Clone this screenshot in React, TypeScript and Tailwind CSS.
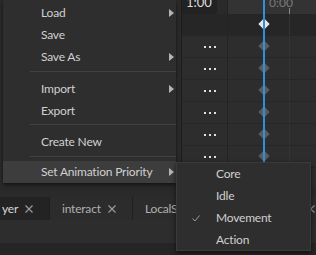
import React from 'react';

const font = { fontFamily: 'Lato, "Noto Sans", sans-serif' };

function Arrow() {
  return (
    <svg width="5" height="8" viewBox="0 0 5 8" className="absolute right-[2px] top-[7px]">
      <path d="M0 0 L5 4 L0 8 Z" fill="#b5b5b5" />
    </svg>
  );
}

function Item({ label, arrow, active }: { label: string; arrow?: boolean; active?: boolean }) {
  return (
    <div className={`relative h-[22px] flex items-center pl-[38px] text-[12px] tracking-[-0.2px] text-[#d0d0d0] ${active ? 'bg-[#3d3d3d]' : ''}`}>
      {label}
      {arrow && <Arrow />}
    </div>
  );
}

function Sep({ h, pt }: { h: string; pt: string }) {
  return (
    <div className={`${h} ${pt}`}>
      <div className="ml-[27px] h-px bg-[#414141]" />
    </div>
  );
}

function Dots() {
  return (
    <div className="flex gap-[3px]">
      <span className="w-[2px] h-[2px] bg-[#e0e0e0]" />
      <span className="w-[2px] h-[2px] bg-[#e0e0e0]" />
      <span className="w-[2px] h-[2px] bg-[#e0e0e0]" />
    </div>
  );
}

function Row({ first }: { first?: boolean }) {
  return (
    <div className={`h-[22px] flex border-b border-[#272727] ${first ? 'bg-[#262626]' : 'bg-[#2d2d2d]'}`}>
      <div className="w-[46px] flex items-center justify-end pr-[11px] border-r border-[#232323]">
        {!first && <Dots />}
      </div>
      <div className="flex-1 relative">
        <div className="absolute left-[61px] top-0 bottom-0 w-px bg-[#343434]" />
        <div
          className={`absolute left-[32px] top-[6px] w-[8px] h-[8px] rotate-45 ${first ? 'bg-[#e6e6e6]' : 'bg-[#5c5c5c]'}`}
        />
      </div>
    </div>
  );
}

function Tab({ label, w, active, pl }: { label: string; w: string; active?: boolean; pl: string }) {
  return (
    <div className={`${w} ${pl} h-full flex items-center gap-[7px] border-r border-[#1f1f1f] text-[12px] tracking-[-0.2px] ${active ? 'bg-[#232323] text-[#d8d8d8]' : 'bg-[#2c2c2c] text-[#b0b0b0]'}`}>
      <span>{label}</span>
      <svg width="8" height="8" viewBox="0 0 8 8">
        <path d="M0.5 0.5 L7.5 7.5 M7.5 0.5 L0.5 7.5" stroke="#9a9a9a" strokeWidth="1.2" />
      </svg>
    </div>
  );
}

export default function App() {
  return (
    <div className="w-[316px] h-[255px] relative overflow-hidden bg-[#2a2a2a] flex flex-col" style={font}>
      <div className="h-[186px] flex">
        <div className="w-[182px] bg-[#2b2b2b] border-r border-[#1d1d1d]" />
        <div className="flex-1 flex flex-col relative bg-[#2d2d2d]">
          <div className="h-[14px] flex bg-[#2a2a2a]">
            <div className="w-[35px] bg-[#222222] rounded-br-[3px] overflow-hidden text-[13px] leading-[13px] text-[#dcdcdc] pl-[4px]">
              <div className="-mt-[4px]">1:00</div>
            </div>
            <div className="w-[11px] border-r border-[#232323]" />
            <div className="flex-1 bg-[#333333] relative overflow-hidden">
              <div className="absolute left-[41px] -top-[6px] text-[12px] text-[#7a7a7a]">0:00</div>
              <div className="absolute left-[61px] top-[8px] w-px h-[6px] bg-[#8a8a8a]" />
            </div>
          </div>
          <Row first />
          <Row />
          <Row />
          <Row />
          <Row />
          <Row />
          <Row />
          <div className="absolute left-[81px] top-0 bottom-0 w-[2px] bg-[#2f8fdc]" />
        </div>
      </div>
      <div className="h-[11px]" />
      <div className="h-[23px] flex bg-[#2a2a2a]">
        <Tab label="yer" w="w-[50px]" pl="pl-[2px]" active />
        <Tab label="interact" w="w-[83px]" pl="pl-[12px]" />
        <div className="flex-1 flex items-center justify-between pl-[12px] pr-[1px] text-[12px] tracking-[-0.2px] text-[#b0b0b0] bg-[#2c2c2c]">
          <span>LocalScript</span>
          <svg width="5" height="8" viewBox="0 0 5 8">
            <path d="M4.5 0.5 L0.5 4 L4.5 7.5" stroke="#9a9a9a" fill="none" strokeWidth="1.2" />
          </svg>
        </div>
      </div>
      <div className="h-[23px] bg-[#2d2d2d]" />
      <div className="flex-1 bg-[#252525]" />

      {/* file menu */}
      <div className="absolute left-[3px] top-0 w-[173px] pt-[2px] bg-[#2e2e2e] shadow-[0_2px_4px_rgba(0,0,0,0.6)]">
        <Item label="Load" arrow />
        <Item label="Save" />
        <Item label="Save As" arrow />
        <Sep h="h-[10px]" pt="pt-[3px]" />
        <Item label="Import" arrow />
        <Item label="Export" />
        <Sep h="h-[9px]" pt="pt-[2px]" />
        <Item label="Create New" />
        <Sep h="h-[8px]" pt="pt-[3px]" />
        <Item label="Set Animation Priority" arrow active />
      </div>

      {/* priority submenu */}
      <div className="absolute left-[176px] top-[162px] w-[135px] h-[89px] bg-[#2e2e2e] border border-[#3a3a3a] shadow-[0_2px_5px_rgba(0,0,0,0.6)] flex flex-col">
        {['Core', 'Idle', 'Movement', 'Action'].map((p) => (
          <div key={p} className="h-[22px] shrink-0 flex items-center text-[12px] tracking-[-0.2px] text-[#d0d0d0]">
            <div className="w-[39px] flex justify-end pr-[16px]">
              {p === 'Movement' && (
                <svg width="8" height="7" viewBox="0 0 8 7">
                  <path d="M0.5 3.5 L3 6 L7.5 0.5" stroke="#9a9a9a" fill="none" strokeWidth="1" />
                </svg>
              )}
            </div>
            {p}
          </div>
        ))}
      </div>
    </div>
  );
}
